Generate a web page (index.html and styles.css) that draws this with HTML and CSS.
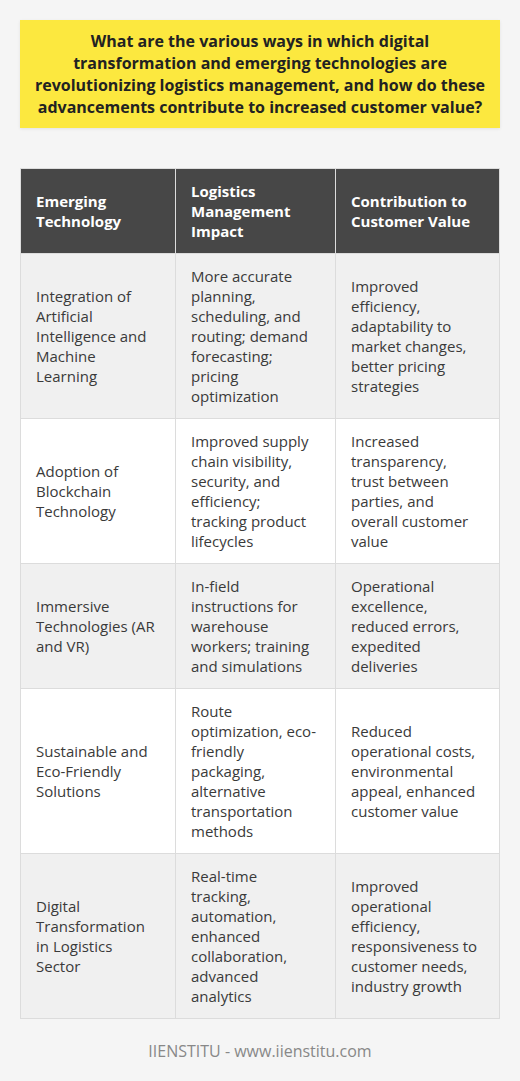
FILE: index.html
```html
<!DOCTYPE html>
<html lang="en">
<head>
<meta charset="utf-8">
<title>Logistics Management</title>
<link rel="stylesheet" href="styles.css">
</head>
<body>
<div class="page">
  <div class="title-box">
    <h1 class="title">What are the various ways in which digital transformation and emerging technologies are revolutionizing logistics management, and how do these advancements contribute to increased customer value?</h1>
  </div>
  <table class="data-table">
    <colgroup>
      <col class="col-a">
      <col class="col-b">
      <col class="col-c">
    </colgroup>
    <thead>
      <tr>
        <th>Emerging Technology</th>
        <th>Logistics Management Impact</th>
        <th>Contribution to Customer Value</th>
      </tr>
    </thead>
    <tbody>
      <tr>
        <td>Integration of Artificial Intelligence and Machine Learning</td>
        <td>More accurate planning, scheduling, and routing; demand forecasting; pricing optimization</td>
        <td>Improved efficiency, adaptability to market changes, better pricing strategies</td>
      </tr>
      <tr>
        <td>Adoption of Blockchain Technology</td>
        <td>Improved supply chain visibility, security, and efficiency; tracking product lifecycles</td>
        <td>Increased transparency, trust between parties, and overall customer value</td>
      </tr>
      <tr>
        <td>Immersive Technologies (AR and VR)</td>
        <td>In-field instructions for warehouse workers; training and simulations</td>
        <td>Operational excellence, reduced errors, expedited deliveries</td>
      </tr>
      <tr>
        <td>Sustainable and Eco-Friendly Solutions</td>
        <td>Route optimization, eco-friendly packaging, alternative transportation methods</td>
        <td>Reduced operational costs, environmental appeal, enhanced customer value</td>
      </tr>
      <tr>
        <td>Digital Transformation in Logistics Sector</td>
        <td>Real-time tracking, automation, enhanced collaboration, advanced analytics</td>
        <td>Improved operational efficiency, responsiveness to customer needs, industry growth</td>
      </tr>
    </tbody>
  </table>
  <p class="footer">IIENSTITU - www.iienstitu.com</p>
</div>
</body>
</html>
```
FILE: styles.css
```css
html, body {
  margin: 0;
  padding: 0;
  background: #f5f5f5;
}
body {
  font-family: "Open Sans", "Liberation Sans", sans-serif;
  color: #333;
}
.page {
  padding: 20px 20px 0;
}
.title-box {
  background: #fce83f;
  padding: 10px 12px;
  box-shadow: 0 1px 3px rgba(0,0,0,0.08);
}
.title {
  margin: 0;
  font-size: 16px;
  line-height: 22px;
  font-weight: 700;
  text-align: center;
  color: #222;
}
.data-table {
  margin: 40px auto 0;
  width: 479px;
  border-collapse: collapse;
  table-layout: fixed;
  font-size: 15px;
  line-height: 20px;
}
.col-a { width: 155px; }
.col-b { width: 160px; }
.col-c { width: 164px; }
.data-table th,
.data-table td {
  border: 1px solid #dcdcdc;
  padding: 12px 15px 12px 15px;
  text-align: left;
  vertical-align: middle;
}
.data-table th {
  background: #474747;
  color: #fff;
  font-weight: 700;
  border-color: #dcdcdc;
}
.data-table tbody tr:nth-child(odd) td {
  background: #f0f0f0;
}
.data-table tbody tr:nth-child(even) td {
  background: #fff;
}
.data-table td {
  color: #3a3a3a;
}
.footer {
  margin: 21px 0 0;
  text-align: center;
  font-size: 16px;
  line-height: 22px;
  color: #888;
}
```
